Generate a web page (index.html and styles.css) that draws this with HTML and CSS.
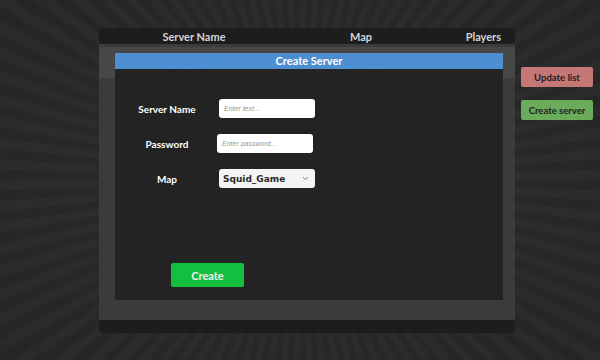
FILE: index.html
```html
<!DOCTYPE html>
<html>
<head>
<meta charset="utf-8">
<link rel="stylesheet" href="styles.css">
</head>
<body>
<div class="stage">
  <div class="list">
    <div class="list-head">
      <span class="c1">Server Name</span>
      <span class="c2">Map</span>
      <span class="c3">Players</span>
    </div>
    <div class="list-body">
      <div class="row">
        <span class="c1">Room 3477</span>
        <span class="c2">Squid_Game</span>
        <span class="c3">3/10</span>
      </div>
    </div>
    <div class="list-foot"></div>

    <div class="modal">
      <div class="modal-title">Create Server</div>
      <div class="modal-body">
        <div class="form">
          <label class="lbl">Server Name</label>
          <div class="field"><input class="inp" type="text" placeholder="Enter text..."></div>
          <label class="lbl">Password</label>
          <div class="field shift"><input class="inp" type="text" placeholder="Enter password..."></div>
          <label class="lbl">Map</label>
          <div class="field"><div class="sel"><span>Squid_Game</span><svg width="7" height="5" viewBox="0 0 7 5"><path d="M1 1.2 L3.5 3.6 L6 1.2" fill="none" stroke="#777" stroke-width="1"/></svg></div></div>
        </div>
        <button class="create">Create</button>
      </div>
    </div>
  </div>
  <div class="side">
    <button class="sbtn update">Update list</button>
    <button class="sbtn newsrv">Create server</button>
  </div>
</div>
</body>
</html>
```

FILE: styles.css
```css
html, body {
  margin: 0;
  padding: 0;
}
body {
  width: 600px;
  height: 360px;
  overflow: hidden;
  font-family: "Lato", "Open Sans", sans-serif;
  background-color: #2b2b2b;
  background-image:
    radial-gradient(ellipse at 50% 50%, rgba(0,0,0,0) 45%, rgba(0,0,0,0.08) 100%),
    repeating-conic-gradient(from 0deg at 50% 50%, #2d2d2d 0deg 2deg, #282828 2deg 4deg);
}
.stage {
  display: flex;
  gap: 6px;
  padding: 28px 0 0 99px;
}
.list {
  position: relative;
  width: 416px;
  height: 305px;
  display: flex;
  flex-direction: column;
  background: #3b3b3b;
}
.list-head {
  height: 16px;
  background: #1d1d1d;
  border-radius: 2px;
  display: grid;
  grid-template-columns: 190px 144px 82px;
  align-items: center;
  color: #d4d4d4;
  font-weight: 700;
  font-size: 11px;
}
.c1, .c2 { text-align: center; }
.c3 { text-align: right; padding-right: 14px; }
.list-body {
  flex: 1;
  padding-top: 3px;
}
.row {
  height: 31px;
  background: #474747;
  display: grid;
  grid-template-columns: 190px 144px 82px;
  align-items: center;
  padding-top: 6px;
  box-sizing: border-box;
  color: #8fb2d6;
  font-weight: 700;
  font-size: 10px;
}
.list-foot {
  height: 13px;
  background: #1d1d1d;
  border-radius: 2px;
}
.modal {
  position: absolute;
  left: 16px;
  top: 25px;
  width: 388px;
  height: 247px;
  display: flex;
  flex-direction: column;
}
.modal-title {
  height: 16px;
  background: rgba(76, 145, 212, 0.96);
  color: #fff;
  font-weight: 700;
  font-size: 11px;
  text-align: center;
  line-height: 16px;
}
.modal-body {
  flex: 1;
  background: #232323;
  padding-top: 30px;
  display: flex;
  flex-direction: column;
}
.form {
  display: grid;
  grid-template-columns: 104px 96px;
  grid-auto-rows: 19px;
  row-gap: 16px;
  align-items: center;
}
.lbl {
  text-align: center;
  color: #fff;
  font-weight: 700;
  font-size: 10px;
}
.field { display: flex; }
.field.shift { margin-left: -2px; }
.inp {
  box-sizing: border-box;
  width: 96px;
  height: 19px;
  border: none;
  border-radius: 3px;
  background: #fff;
  padding: 0 5px;
  font-family: "Liberation Sans", sans-serif;
  font-size: 7px;
  outline: none;
}
.inp::placeholder {
  color: #999;
  font-style: italic;
}
.sel {
  box-sizing: border-box;
  width: 96px;
  height: 19px;
  border-radius: 3px;
  background: #f4f4f4;
  padding: 0 6px 0 4px;
  display: flex;
  align-items: center;
  justify-content: space-between;
  color: #2a2a2a;
  font-family: "DejaVu Sans", sans-serif;
  font-weight: 700;
  font-size: 9px;
}
.create {
  margin: 75px 0 0 56px;
  width: 73px;
  height: 24px;
  border: none;
  border-radius: 2px;
  background: #14bf40;
  color: #f2f2f2;
  font-family: inherit;
  font-weight: 700;
  font-size: 11px;
  padding: 0;
}
.side {
  display: flex;
  flex-direction: column;
  gap: 13px;
  padding-top: 39px;
}
.sbtn {
  width: 72px;
  height: 20px;
  border: none;
  border-radius: 2px;
  padding: 0;
  font-family: inherit;
  font-weight: 700;
  font-size: 9.5px;
  color: #1e1e1e;
}
.update { background: #c47775; }
.newsrv { background: #6aab5c; }
```
